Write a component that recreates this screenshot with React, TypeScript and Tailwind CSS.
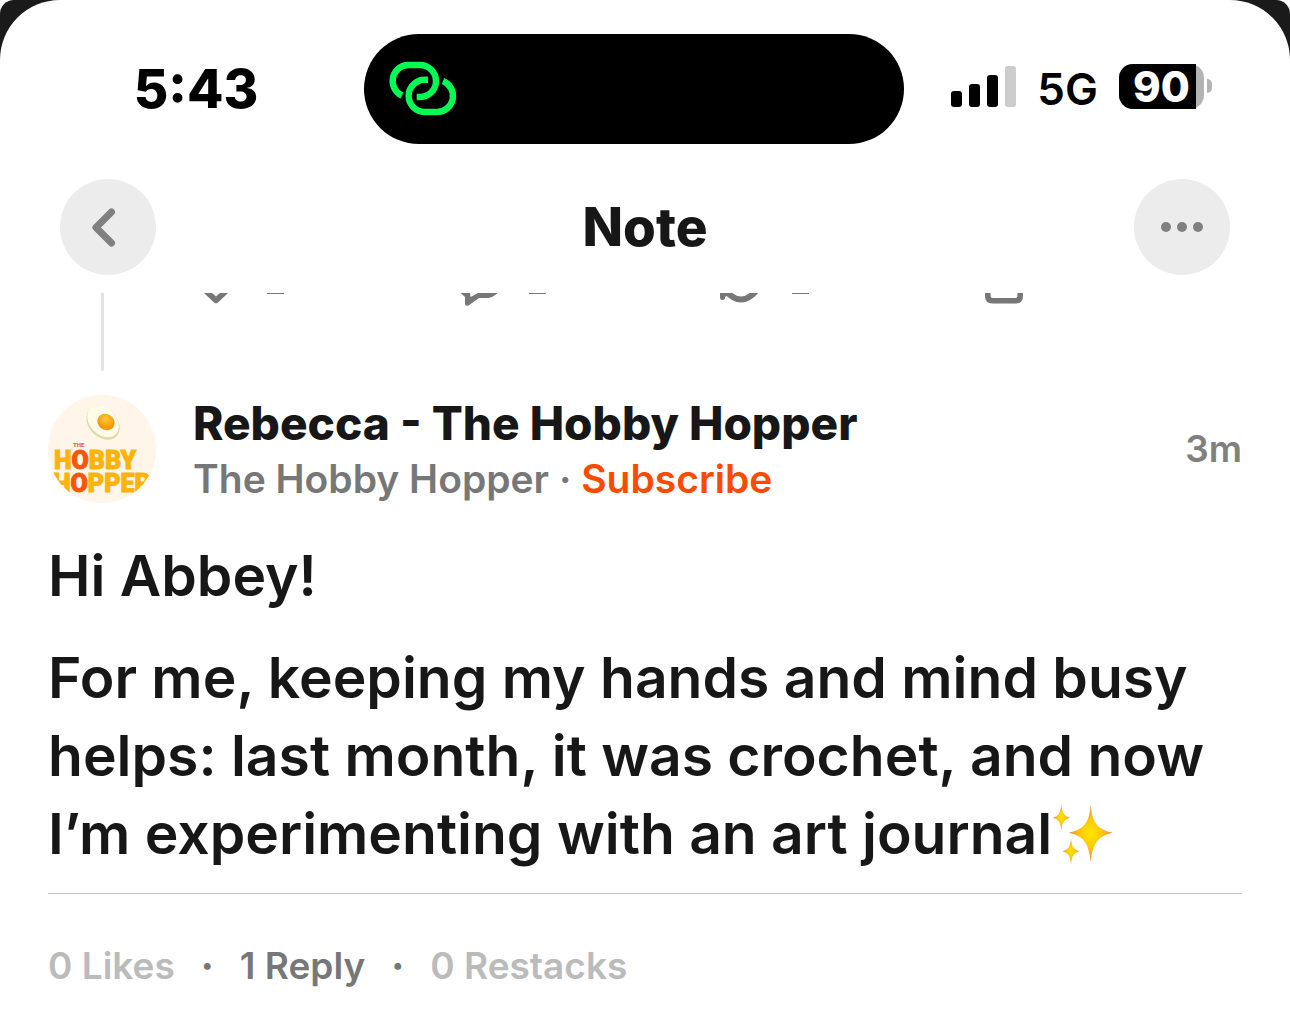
import type { ReactNode } from "react";

const stats = [
  { label: "0 Likes", active: false },
  { label: "1 Reply", active: true },
  { label: "0 Restacks", active: false },
];

const actions: { name: string; counted: boolean; icon: ReactNode }[] = [
  {
    name: "Like",
    counted: true,
    icon: <path d="M11 0 L21 9.6 Q23 11.2 25 9.6 L35 0 H27 L23 3.6 L19 0 Z" fill="#777777" />,
  },
  {
    name: "Comment",
    counted: true,
    icon: <path d="M5.5 0 L10 4 V11 Q10.5 13.5 13.5 12.5 L24 5 H33 Q38 4.4 42.5 0 H23 L15.6 4 L15 0 Z" fill="#777777" />,
  },
  {
    name: "Restack",
    counted: true,
    icon: (
      <>
        <path d="M4.5 -1 V4.6" stroke="#777777" strokeWidth="5" strokeLinecap="round" />
        <path d="M2 0 H13 L7 4 Z" fill="#777777" />
        <path d="M7 -3 Q23 16 39 -3" fill="none" stroke="#777777" strokeWidth="6" />
      </>
    ),
  },
  {
    name: "Share",
    counted: false,
    icon: <path d="M7.8 -4 V3 Q7.8 7.8 12.6 7.8 H35.4 Q40.2 7.8 40.2 3 V-4" fill="none" stroke="#777777" strokeWidth="5.6" />,
  },
];

function LinkIcon() {
  return (
    <svg viewBox="29 30 72 58" className="ml-6 h-[58px] w-[72px]" fill="none" stroke="#04fb54" strokeWidth="6.4" aria-hidden="true">
      <path d="M43 65.5 A16 16 0 0 1 48.3 35 H61 A16 16 0 0 1 61 67 H57.7" />
      <path d="M69 49.7 H65.8 A16.1 16.1 0 0 0 65.8 82 H77.3 A16.1 16.1 0 0 0 84 51" />
    </svg>
  );
}

function Sparkles() {
  return (
    <svg viewBox="70 38 186 182" className="inline-block h-[61px] w-[62px] align-[-10px]" role="img" aria-label="Sparkles">
      <defs>
        <radialGradient id="spark">
          <stop offset="0" stopColor="#ffe600" />
          <stop offset="0.5" stopColor="#fdc70a" />
          <stop offset="1" stopColor="#e58a4a" />
        </radialGradient>
      </defs>
      <g fill="url(#spark)">
        <path d="M186 42 C190 92 202 116 252 127 C206 138 192 160 186 215 C180 160 168 138 120 127 C170 116 182 92 186 42 Z" />
        <path d="M98 40 C100 67 106 77 124 82 C106 87 100 96 98 122 C96 96 90 87 72 82 C90 77 96 67 98 40 Z" />
        <path d="M127 144 C129 168 135 177 152 182 C135 187 129 197 127 222 C125 197 119 187 102 182 C119 177 125 168 127 144 Z" />
      </g>
    </svg>
  );
}

function Avatar() {
  return (
    <svg viewBox="0 0 108 108" className="size-27 shrink-0" role="img" aria-label="The Hobby Hopper">
      <defs>
        <clipPath id="avatar">
          <circle cx="54" cy="54" r="54" />
        </clipPath>
        <clipPath id="lettering">
          <path d="M0 0 H108 V78 Q98 80 92 98 H16 Q11 86 4 78 H0 Z" />
        </clipPath>
        <radialGradient id="yolk" cx="0.4" cy="0.35">
          <stop offset="0" stopColor="#ffc83a" />
          <stop offset="1" stopColor="#f39a0c" />
        </radialGradient>
      </defs>
      <g clipPath="url(#avatar)">
        <rect width="108" height="108" fill="#fff5e8" />
        <g transform="rotate(45 55 28)">
          <ellipse cx="55" cy="28" rx="19" ry="14" fill="#e3d9a6" />
          <ellipse cx="54" cy="27" rx="18" ry="13" fill="#fffbe9" />
        </g>
        <ellipse cx="58" cy="27" rx="9" ry="8" fill="url(#yolk)" transform="rotate(35 58 27)" />
        <g fontFamily="Roboto, sans-serif" fontWeight="900">
          <text x="25" y="52" fontSize="6" fill="#d9663a">THE</text>
          <g fontSize="25" fill="#fbb40a" stroke="#fbb40a">
            <text x="6" y="74">
              H<tspan fill="#f4570c" stroke="#f4570c">O</tspan>BBY
            </text>
            <text x="5" y="97" clipPath="url(#lettering)">
              H<tspan fill="#f4570c" stroke="#f4570c">O</tspan>PPER
            </text>
          </g>
        </g>
      </g>
    </svg>
  );
}

function StatusBar() {
  return (
    <div className="grid grid-cols-[1fr_540px_1fr] items-center pt-[34px] pr-[22px]">
      <p className="pl-7 text-center text-[53px] leading-[110px] font-extrabold text-black">5:43</p>
      <div className="flex h-[110px] items-center rounded-full bg-black">
        <LinkIcon />
      </div>
      <div className="flex items-center justify-end pr-14">
        <div className="mb-1.5 flex h-[41px] items-end gap-[7px]">
          <span className="h-4 w-[11px] rounded-[3px] bg-black" />
          <span className="h-[23px] w-[11px] rounded-[3px] bg-black" />
          <span className="h-8 w-[11px] rounded-[3px] bg-black" />
          <span className="h-[41px] w-[11px] rounded-[3px] bg-[#cccccc]" />
        </div>
        <span className="ml-[21px] text-[44px] leading-12 font-semibold text-black">5G</span>
        <div className="mb-1.5 ml-[21px] flex items-center">
          <div className="flex w-[85px] rounded-[14px] bg-[#b3b3b3]">
            <span className="w-[77px] rounded-l-[14px] bg-black pl-2 text-center text-[42px] leading-[45px] font-extrabold text-white">
              90
            </span>
          </div>
          <span className="ml-[3px] h-3.5 w-[5px] rounded-r-full bg-[#b3b3b3]" />
        </div>
      </div>
    </div>
  );
}

export default function App() {
  return (
    <div className="bg-white font-['Inter',sans-serif] text-[#171717]">
      <div className="rounded-t-[14px] bg-[#1a1a1a]">
        <main className="min-h-screen rounded-t-[60px] bg-white">
          <StatusBar />

          <header className="flex items-center justify-between px-[60px] pt-[35px] pb-[18px]">
            <button type="button" aria-label="Back" className="flex size-24 items-center justify-center rounded-full bg-[#ececec]">
              <svg viewBox="0 0 96 96" className="size-24" fill="none" stroke="#808080" strokeWidth="7" strokeLinecap="round" strokeLinejoin="round">
                <path d="M51.5 33 L36 48.5 L51.5 64" />
              </svg>
            </button>
            <h1 className="text-[53px] leading-[60px] font-extrabold">Note</h1>
            <button type="button" aria-label="More" className="flex size-24 items-center justify-center gap-1.5 rounded-full bg-[#ececec]">
              <span className="size-2.5 rounded-full bg-[#808080]" />
              <span className="size-2.5 rounded-full bg-[#808080]" />
              <span className="size-2.5 rounded-full bg-[#808080]" />
            </button>
          </header>

          <div className="px-12">
            {/* tail of the parent note, scrolled under the header */}
            <div className="flex h-[102px] gap-[37px]">
              <div className="flex w-27 shrink-0 justify-center">
                <span className="h-[78px] w-[3px] rounded-b-full bg-[#e3e3e3]" />
              </div>
              <div className="grid flex-1 grid-cols-4">
                {actions.map((action) => (
                  <button key={action.name} type="button" aria-label={action.name} className="flex h-[15px] items-start">
                    <svg viewBox="0 0 44 15" className="h-[15px] w-11">
                      {action.icon}
                    </svg>
                    {action.counted && <span className="ml-[30px] h-px w-[17px] bg-[#777777]" />}
                  </button>
                ))}
              </div>
            </div>

            <article>
              <div className="flex items-start">
                <Avatar />
                <div className="ml-[37px] flex-1">
                  <h2 className="text-[46px] leading-[56px] font-extrabold">Rebecca - The Hobby Hopper</h2>
                  <p className="text-[39px] leading-[56px] font-semibold text-[#777777]">
                    The Hobby Hopper ·{" "}
                    <a href="#" className="text-[#fa4b00]">
                      Subscribe
                    </a>
                  </p>
                </div>
                <time className="text-[37px] leading-[108px] font-semibold text-[#808080]">3m</time>
              </div>

              <div className="mt-[30px] space-y-6 text-[57px] leading-[78px] font-semibold">
                <p>Hi Abbey!</p>
                <p>
                  For me, keeping my hands and mind busy helps: last month, it was crochet, and now I’m experimenting with an art
                  journal
                  <Sparkles />
                </p>
              </div>
            </article>

            <div className="mt-5 flex gap-[26px] border-t border-[#c6c6c6] pt-12 text-[37px] leading-12 font-semibold">
              {stats.map((stat, index) => (
                <div key={stat.label} className="flex gap-[26px]">
                  {index > 0 && <span className="font-extrabold text-[#777777]">·</span>}
                  <span className={stat.active ? "text-[#777777]" : "text-[#bbbbbb]"}>{stat.label}</span>
                </div>
              ))}
            </div>
          </div>
        </main>
      </div>
    </div>
  );
}
